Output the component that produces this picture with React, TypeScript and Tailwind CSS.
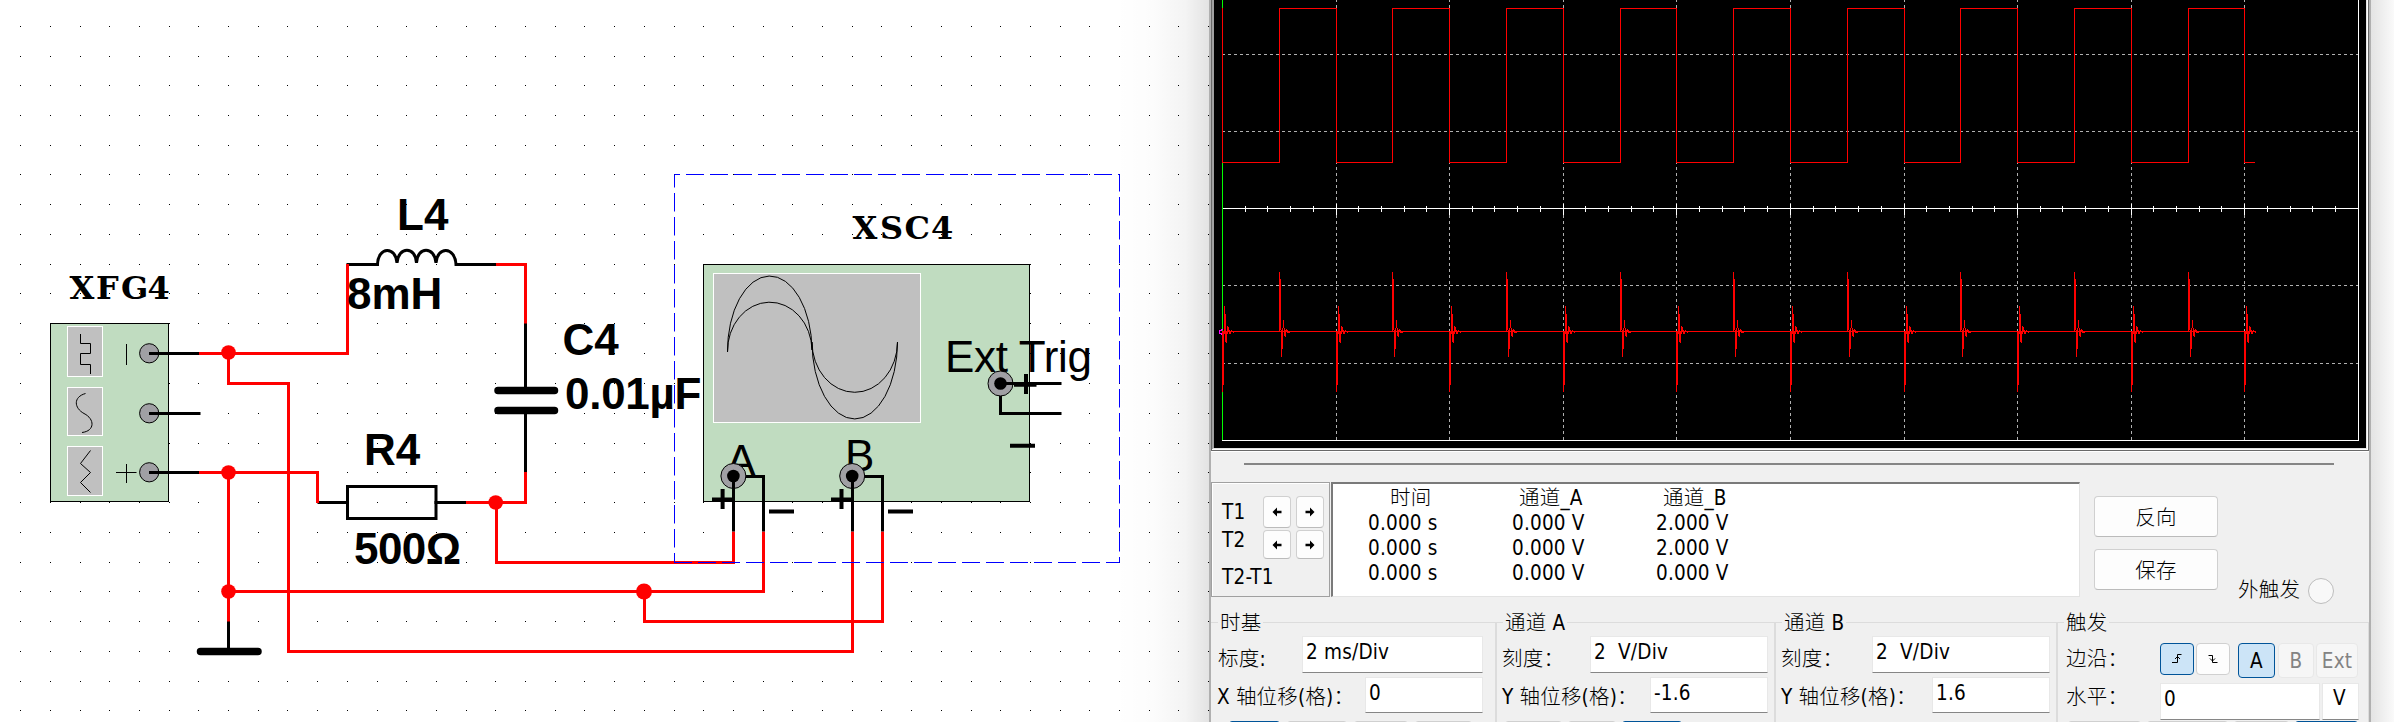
import React from "react";

const XS = Array.from({ length: 41 }, (_, i) => Math.floor(20.6 + i * 29.7));
const YS = [26, 56, 85, 115, 145, 174, 204, 234, 264, 293, 323, 353, 383, 413, 443, 472, 502, 532, 562, 591, 621, 651, 681, 710];

const Wire = ({ d, black = false }: { d: string; black?: boolean }) => (
  <path d={d} fill="none" stroke={black ? "#000" : "#f00"} strokeWidth={3} strokeLinecap="square" />
);

const Port = ({ x, y }: { x: number; y: number }) => (
  <>
    <circle cx={x} cy={y} r={12.5} fill="#a0a0a4" stroke="#000" />
    <circle cx={x} cy={y} r={6.3} />
  </>
);

const BOLD = "font-['Liberation_Sans',Arial,sans-serif] text-[44px] font-bold";
const REG = "font-['Liberation_Sans',Arial,sans-serif] text-[44px]";
const SLAB = "font-['DejaVu_Serif',serif] text-[32px] font-bold";

function Schematic() {
  return (
    <svg width="1209" height="722" viewBox="0 0 1209 722" className="block shrink-0">
      <defs>
        <linearGradient id="shadeL" x1="0" x2="1">
          <stop offset="0" stopColor="#000" stopOpacity="0" />
          <stop offset="0.4" stopColor="#000" stopOpacity="0.012" />
          <stop offset="0.75" stopColor="#000" stopOpacity="0.045" />
          <stop offset="1" stopColor="#000" stopOpacity="0.11" />
        </linearGradient>
      </defs>
      <rect x="1115" y="0" width="94" height="722" fill="url(#shadeL)" />
      {YS.map((y) => XS.map((x) => <rect key={`${x}-${y}`} x={x} y={y} width="1" height="1" />))}

      {/* function generator */}
      <rect x="50.5" y="323.5" width="118" height="178" fill="#c0dcc0" stroke="#000" />
      <g fill="#c0c0c0" stroke="#fff">
        <rect x="67.5" y="326.5" width="35" height="50" />
        <rect x="67.5" y="387.5" width="35" height="48" />
        <rect x="67.5" y="446.5" width="35" height="49" />
      </g>
      <g fill="none" stroke="#000">
        <path d="M80.5 334V343.5H90.5V353.5H80.5V364.5H90.5V374" />
        <path d="M85.5 393.5C73 397 74 408 84 413.5C95 419 95 431 82 432.5" />
        <path d="M90.5 450.5L80.5 463.5L90.5 472.5L80.5 482.5L90.5 492.5" />
        <path d="M126.5 344V365M116 472.5H136.5M126.5 464V483" />
      </g>
      {[353, 413, 472].map((y) => (
        <g key={y}>
          <circle cx="149.2" cy={y + 0.3} r="9.6" fill="#a0a0a4" stroke="#000" />
          <Wire black d={`M150.5 ${y + 0.5}H199`} />
        </g>
      ))}

      {/* wiring */}
      <Wire black d="M348 264.5H377.5C378 246 396 246 397 263C398 246 416 246 416.5 263C417 246 435 246 436 263C437 246 455 246 456 264.5H496" />
      <Wire black d="M525.5 323.5V388M525.5 413V472" />
      <Wire black d="M319 502.5H347M436 502.5H466M228.5 621V649" />
      <g stroke="#000" strokeWidth="7.5" strokeLinecap="round">
        <path d="M498 390.5H554.5M498 410.5H554.5M200.5 651.5H258" />
      </g>
      <rect x="347.5" y="486.5" width="88.5" height="32" fill="none" stroke="#000" strokeWidth="3" />
      <Wire d="M200.5 353.5H347.5V265.5" />
      <Wire d="M228.5 353.5V383.5H288.5V651.5H852.5V533" />
      <Wire d="M497.5 264.5H525.5V322" />
      <Wire d="M525.5 473.5V502.5H467.5M496.5 502.5V562.5H733.5V533" />
      <Wire d="M200.5 472.5H317.5V501.5" />
      <Wire d="M228.5 472.5V620" />
      <Wire d="M228.5 591.5H763.5V533M644.5 591.5V621.5H882.5V533" />
      <g fill="#f00">
        <circle cx="228.5" cy="352.5" r="7.3" />
        <circle cx="228.5" cy="472.5" r="7.3" />
        <circle cx="228.5" cy="591.5" r="7.3" />
        <circle cx="495.7" cy="502.5" r="7.3" />
        <circle cx="644" cy="591.5" r="8" />
      </g>

      {/* oscilloscope symbol */}
      <rect x="703.5" y="264.5" width="326" height="237" fill="#c0dcc0" stroke="#000" />
      <rect x="713.5" y="273.5" width="207" height="149" fill="#c0c0c0" stroke="#fff" />
      <g fill="none" stroke="#000">
        <path d="M727.5 352A42 74.5 0 0 1 812 350" />
        <path d="M812 342A42.5 76.5 0 0 0 897.5 342" />
        <path d="M727.5 352A42 48.5 0 0 1 812 350" />
        <path d="M812 342A42.5 50 0 0 0 897.5 342" />
      </g>
      <text x="945" y="372" className={REG} textLength="147">Ext Trig</text>
      <text x="726.5" y="476" className={REG}>A</text>
      <text x="845" y="471" className={REG}>B</text>
      <Wire black d="M1000.5 383.5H1060M1000.5 383.5V413.5H1060" />
      <Wire black d="M733.5 476.5V530M733.5 476.5H763.5V530" />
      <Wire black d="M852.5 476.5V530M852.5 476.5H882.5V530" />
      <Port x={1000.5} y={383.5} />
      <Port x={733.4} y={476} />
      <Port x={852.2} y={476} />
      <Wire black d="M1002 383.5H1030M733.5 478V500M852.5 478V500" />
      <g stroke="#000" strokeWidth="4">
        <path d="M1014 384.7H1036.5M1026 374V394M1010 445.7H1035" />
        <path d="M712 499.5H733M722.6 489V509M769 511.5H794" />
        <path d="M831 499.5H852M841.5 489V509M888 511.5H913" />
      </g>
      <g fill="none" stroke="#00f">
        <path d="M674.5 174.5H1119.5" strokeDasharray="18 6" strokeDashoffset="12.5" />
        <path d="M674.5 174.5V562.5" strokeDasharray="18.5 5.5" strokeDashoffset="5.5" />
        <path d="M1119.5 174.5V562.5" strokeDasharray="18.5 5.5" strokeDashoffset="1.5" />
        <path d="M674 562.5H1119.5" strokeDasharray="18 6" />
      </g>

      <text x="69.5 96 121 147.5" y="299" className={SLAB}>XFG4</text>
      <text x="852.5 880 904.5 931" y="239" className={SLAB}>XSC4</text>
      <text x="397" y="229.5" className={BOLD}>L4</text>
      <text x="347" y="308.5" className={BOLD}>8mH</text>
      <text x="562.5" y="354.5" className={BOLD}>C4</text>
      <text x="565" y="408.5" className={BOLD} textLength="136.5">0.01µF</text>
      <text x="364" y="464.5" className={BOLD}>R4</text>
      <text x="354" y="563.5" className={BOLD} textLength="107">500Ω</text>
    </svg>
  );
}

/* Vertical extents, one pair per pixel column after an edge. */
const FALL = [[331, 392], [331, 385], [306, 334], [314, 342], [331, 343], [326, 334], [327, 331], [330, 334], [331, 334], [330, 332], [331, 332], [331, 333]];
const RISE = [[272, 332], [279, 330], [330, 357], [328, 349], [320, 328], [328, 336], [330, 337], [329, 332], [330, 333], [331, 333], [331, 333]];

function Scope() {
  const div = (k: number) => Math.round(1222 + 113.6 * k);
  const mids = [1279, 1392, 1506, 1620, 1733, 1847, 1960, 2074, 2188];
  const square =
    "M1222.5 8V162.5" +
    mids.map((m, i) => `H${m + 0.5}V8.5H${div(i + 1) + 0.5}V162.5`).join("") +
    "H2255";
  return (
    <svg width="1158" height="452" viewBox="1211 0 1158 452" className="block" shapeRendering="crispEdges">
      <rect x="1211" y="0" width="1158" height="452" fill="#f0f0f0" />
      <rect x="1211" y="0" width="1" height="451" fill="#696969" />
      <rect x="1212" y="0" width="2" height="449" fill="#a0a0a0" />
      <rect x="1214" y="0" width="1152" height="448" />
      <rect x="1213" y="448" width="1154" height="1" fill="#e3e3e3" />
      <rect x="1212" y="449" width="1156" height="1" fill="#fff" />
      <rect x="1211" y="450" width="1158" height="1" fill="#696969" />
      <rect x="1211" y="451" width="1158" height="1" fill="#fff" />
      <rect x="2366" y="0" width="1" height="449" fill="#e3e3e3" />
      <rect x="2367" y="0" width="1" height="450" fill="#fff" />
      <rect x="2368" y="0" width="1" height="451" fill="#696969" />
      <g stroke="#b0b0b0" strokeDasharray="3 3">
        {[54, 131, 285, 363].map((y) => <path key={y} d={`M1222 ${y + 0.5}H2358`} />)}
        {[1, 2, 3, 4, 5, 6, 7, 8, 9].map((k) => <path key={k} d={`M${div(k) + 0.5} -1V440`} />)}
      </g>
      <rect x="1222" y="0" width="1" height="440" fill="#0f0" />
      <g fill="#fff">
        <rect x="1223" y="208" width="1136" height="1" />
        <rect x="1222" y="440" width="1137" height="1" />
        <rect x="2358" y="0" width="1" height="441" />
        {Array.from({ length: 49 }, (_, i) => i + 1).map((i) => {
          const major = i % 5 === 0;
          const x = major ? div(i / 5) : Math.floor(1222.3 + i * 22.72);
          return <rect key={i} x={x} y={major ? 204 : 206} width="1" height={major ? 11 : 6} />;
        })}
      </g>
      <path d="M1223 329.5H1221V330.5H1219.5V333.5H1221V334.5H1224" fill="none" stroke="#f0f" />
      <path d={square} fill="none" stroke="#f00" />
      <g fill="#f00">
        <rect x="1223" y="331" width="1031" height="1" />
        {Array.from({ length: 10 }, (_, k) => k).map((k) =>
          FALL.map(([a, b], i) => <rect key={`${k}-${i}`} x={div(k) + i} y={a} width="1" height={b - a} />)
        )}
        {mids.map((m) => RISE.map(([a, b], i) => <rect key={`${m}-${i}`} x={m + i} y={a} width="1" height={b - a} />))}
      </g>
    </svg>
  );
}

function ArrowButton({ left = false, h }: { left?: boolean; h: string }) {
  return (
    <div className={`flex w-[28px] items-center justify-center rounded-[4px] border border-[#d0d0d0] border-b-[#bbb] bg-[#fdfdfd] ${h}`}>
      <svg width="10" height="10" viewBox="0 0 10 10" className={left ? "" : "rotate-180"}>
        <path d="M0.5 5L5 0.5V3.7H9.5V6.3H5V9.5Z" />
      </svg>
    </div>
  );
}

function Group({ legend, width, pad, last = false, children }: { legend: string; width: string; pad: string; last?: boolean; children: React.ReactNode }) {
  return (
    <div className={`flex shrink-0 flex-col ${width}`}>
      <div className="flex h-[21px] items-center">
        <div className={`h-px bg-[#dcdcdc] ${pad}`} />
        <span className="px-[2px] pt-[2px] leading-[21px] whitespace-pre">{legend}</span>
        <div className="h-px flex-1 bg-[#dcdcdc]" />
      </div>
      <div className={`-mt-[10px] flex-1 border-[#dcdcdc] pt-[13px] ${last ? "border-r" : "border-r-2"}`}>{children}</div>
    </div>
  );
}

function Row({ label, value, box, cls, labelCls }: { label: string; value: string; box: string; cls: string; labelCls: string }) {
  return (
    <div className={`flex ${cls}`}>
      <span className={`flex-1 leading-[22px] whitespace-nowrap ${labelCls}`}>{label}</span>
      <div className={`border border-[#e8e8e8] border-b-[#868686] bg-white pl-[3px] leading-[31px] whitespace-pre ${box}`}>{value}</div>
    </div>
  );
}

const Stub = ({ w, on = false }: { w: string; on?: boolean }) => (
  <div className={`h-[30px] rounded-[3px] border ${w} ${on ? "border-[#005499] bg-[#cce4f7]" : "border-[#d0d0d0] bg-[#fdfdfd]"}`} />
);

function Readings() {
  const cols = [
    ["时间", "0.000 s", "0.000 s", "0.000 s", "pl-[22px]"],
    ["通道_A", "0.000 V", "0.000 V", "0.000 V", "pl-[7px]"],
    ["通道_B", "2.000 V", "2.000 V", "0.000 V", "pl-[7px]"],
  ];
  return (
    <div className="ml-px flex h-[115px] w-[749px] shrink-0 border border-t-2 border-l-2 border-[#e3e3e3] border-t-[#7a7a7a] border-l-[#7a7a7a] bg-white pl-[35px]">
      {cols.map((c) => (
        <div key={c[0]} className="w-[144px] pt-[3px] whitespace-nowrap">
          <div className={`h-[24px] leading-[23px] ${c[4]}`}>{c[0]}</div>
          {c.slice(1, 4).map((v, i) => (
            <div key={i} className="h-[25px] leading-[25px]">{v}</div>
          ))}
        </div>
      ))}
    </div>
  );
}

export default function App() {
  return (
    <div className="flex h-[722px] w-[2394px] overflow-hidden bg-white">
      <Schematic />
      <div className="flex h-[722px] w-[1162px] shrink-0 flex-col overflow-hidden border-x-2 border-[#b0b0b0] bg-[#f0f0f0] font-['DejaVu_Sans_Condensed','Noto_Sans_CJK_SC',sans-serif] text-[20.5px] font-light tracking-[0.2px] text-black">
        <Scope />
        <div className="mt-[11px] ml-[33px] h-[2px] w-[1090px] shrink-0 bg-[#858585]" />
        <div className="mt-[17px] flex h-[130px] shrink-0">
          <div className="flex h-[115px] w-[119px] shrink-0 border border-[#a0a0a0] pl-[10px] shadow-[inset_1px_1px_0_#fff]">
            <div className="w-[41px] pt-[15px] whitespace-nowrap">
              <div className="h-[28px] leading-[28px]">T1</div>
              <div className="h-[37px] leading-[28px]">T2</div>
              <div className="leading-[28px]">T2-T1</div>
            </div>
            <div className="flex flex-col gap-[2px] pt-[13px]">
              <div className="flex gap-[5px]"><ArrowButton left h="h-[32px]" /><ArrowButton h="h-[32px]" /></div>
              <div className="flex gap-[5px]"><ArrowButton left h="h-[29px]" /><ArrowButton h="h-[29px]" /></div>
            </div>
          </div>
          <Readings />
          <div className="ml-[14px] flex w-[124px] flex-col gap-[12px] pt-[14px]">
            {["反向", "保存"].map((t) => (
              <div key={t} className="flex h-[41px] items-center justify-center rounded-[4px] border border-[#d0d0d0] border-b-[#bbb] bg-[#fdfdfd] pt-[3px]">{t}</div>
            ))}
          </div>
          <div className="ml-[20px] flex items-start gap-[8px] pt-[96px]">
            <span className="leading-[25px]">外触发</span>
            <div className="h-[26px] w-[26px] rounded-full border border-[#bdbdbd] bg-[#f8f8f8]" />
          </div>
        </div>
        <div className="flex h-[110px] shrink-0">
          <Group legend="时基" width="w-[286px]" pad="w-[7px]">
            <Row label="标度:" value="2 ms/Div" cls="h-[37px] pr-[12px]" labelCls="pl-[7px] pt-[12px]" box="w-[181px]" />
            <Row label="X 轴位移(格)：" value="0" cls="mt-[4px] h-[36px] pr-[12px]" labelCls="pl-[6px] pt-[9px]" box="w-[118px]" />
            <div className="mt-[8px] flex gap-[7px] pl-[18px]"><Stub on w="w-[51px]" /><Stub w="w-[60px]" /><Stub w="w-[54px]" /><Stub w="w-[57px]" /></div>
          </Group>
          <Group legend="通道 A" width="w-[279px]" pad="w-[6px]">
            <Row label="刻度：" value="2  V/Div" cls="h-[37px] pr-[6px]" labelCls="pl-[5px] pt-[12px]" box="w-[178px]" />
            <Row label="Y 轴位移(格)：" value="-1.6" cls="mt-[4px] h-[36px] pr-[6px]" labelCls="pl-[5px] pt-[9px]" box="w-[118px]" />
            <div className="mt-[8px] flex gap-[6px] pl-[8px]"><Stub w="w-[57px]" /><Stub w="w-[48px]" /><Stub on w="w-[60px]" /></div>
          </Group>
          <Group legend="通道 B" width="w-[282px]" pad="w-[6px]">
            <Row label="刻度：" value="2  V/Div" cls="h-[37px] pr-[6px]" labelCls="pl-[5px] pt-[12px]" box="w-[178px]" />
            <Row label="Y 轴位移(格)：" value="1.6" cls="mt-[4px] h-[36px] pr-[6px]" labelCls="pl-[5px] pt-[9px]" box="w-[118px]" />
          </Group>
          <Group legend="触发" width="w-[311px]" pad="w-[6px]" last>
            <div className="flex h-[45px] pl-[8px]">
              <span className="w-[94px] pt-[12px] leading-[22px]">边沿：</span>
              <div className="mt-[7px] flex h-[32px] w-[34px] items-center justify-center rounded-[4px] border border-[#005499] bg-[#cce4f7]">
                <svg width="10" height="10" viewBox="0 0 10 10" fill="none" stroke="#000"><path d="M0 8.5H5.5V0.5H9.5M3 5L5.5 2.5L8 5" /></svg>
              </div>
              <div className="mt-[7px] ml-[2px] flex h-[32px] w-[34px] items-center justify-center rounded-[4px] border border-[#d0d0d0] bg-[#fdfdfd]">
                <svg width="10" height="10" viewBox="0 0 10 10" fill="none" stroke="#000"><path d="M0.5 1.5H4.5V8.5H9.5M2 4.5L4.5 7L7 4.5" /></svg>
              </div>
              <div className="mt-[7px] ml-[8px] flex h-[35px] w-[37px] items-center justify-center rounded-[4px] border border-[#005499] bg-[#cce4f7] pt-[2px]">A</div>
              <div className="mt-[7px] ml-[3px] flex h-[35px] w-[36px] items-center justify-center rounded-[4px] border border-[#e8e8e8] bg-[#f6f6f6] pt-[2px] text-[#838383]">B</div>
              <div className="mt-[7px] ml-[2px] flex h-[35px] w-[42px] items-center justify-center rounded-[4px] border border-[#e8e8e8] bg-[#f6f6f6] pt-[2px] text-[#838383]">Ext</div>
            </div>
            <div className="flex h-[40px] pt-[2px] pl-[8px]">
              <span className="w-[94px] pt-[3px] leading-[22px]">水平：</span>
              <div className="h-[37px] w-[160px] border border-[#e8e8e8] border-b-[#868686] bg-white pl-[3px] leading-[30px]">0</div>
              <div className="ml-[2px] h-[37px] w-[37px] border border-[#e8e8e8] border-b-[#868686] bg-white pl-[10px] leading-[28px]">V</div>
            </div>
            <div className="flex gap-[6px] pl-[10px]"><Stub w="w-[73px]" /><Stub w="w-[81px]" /><Stub w="w-[55px]" /><Stub on w="w-[63px]" /></div>
          </Group>
        </div>
      </div>
      <div className="h-[722px] w-[23px] shrink-0 bg-linear-to-r from-[#e4e4e4] to-[#fafafa]" />
    </div>
  );
}
